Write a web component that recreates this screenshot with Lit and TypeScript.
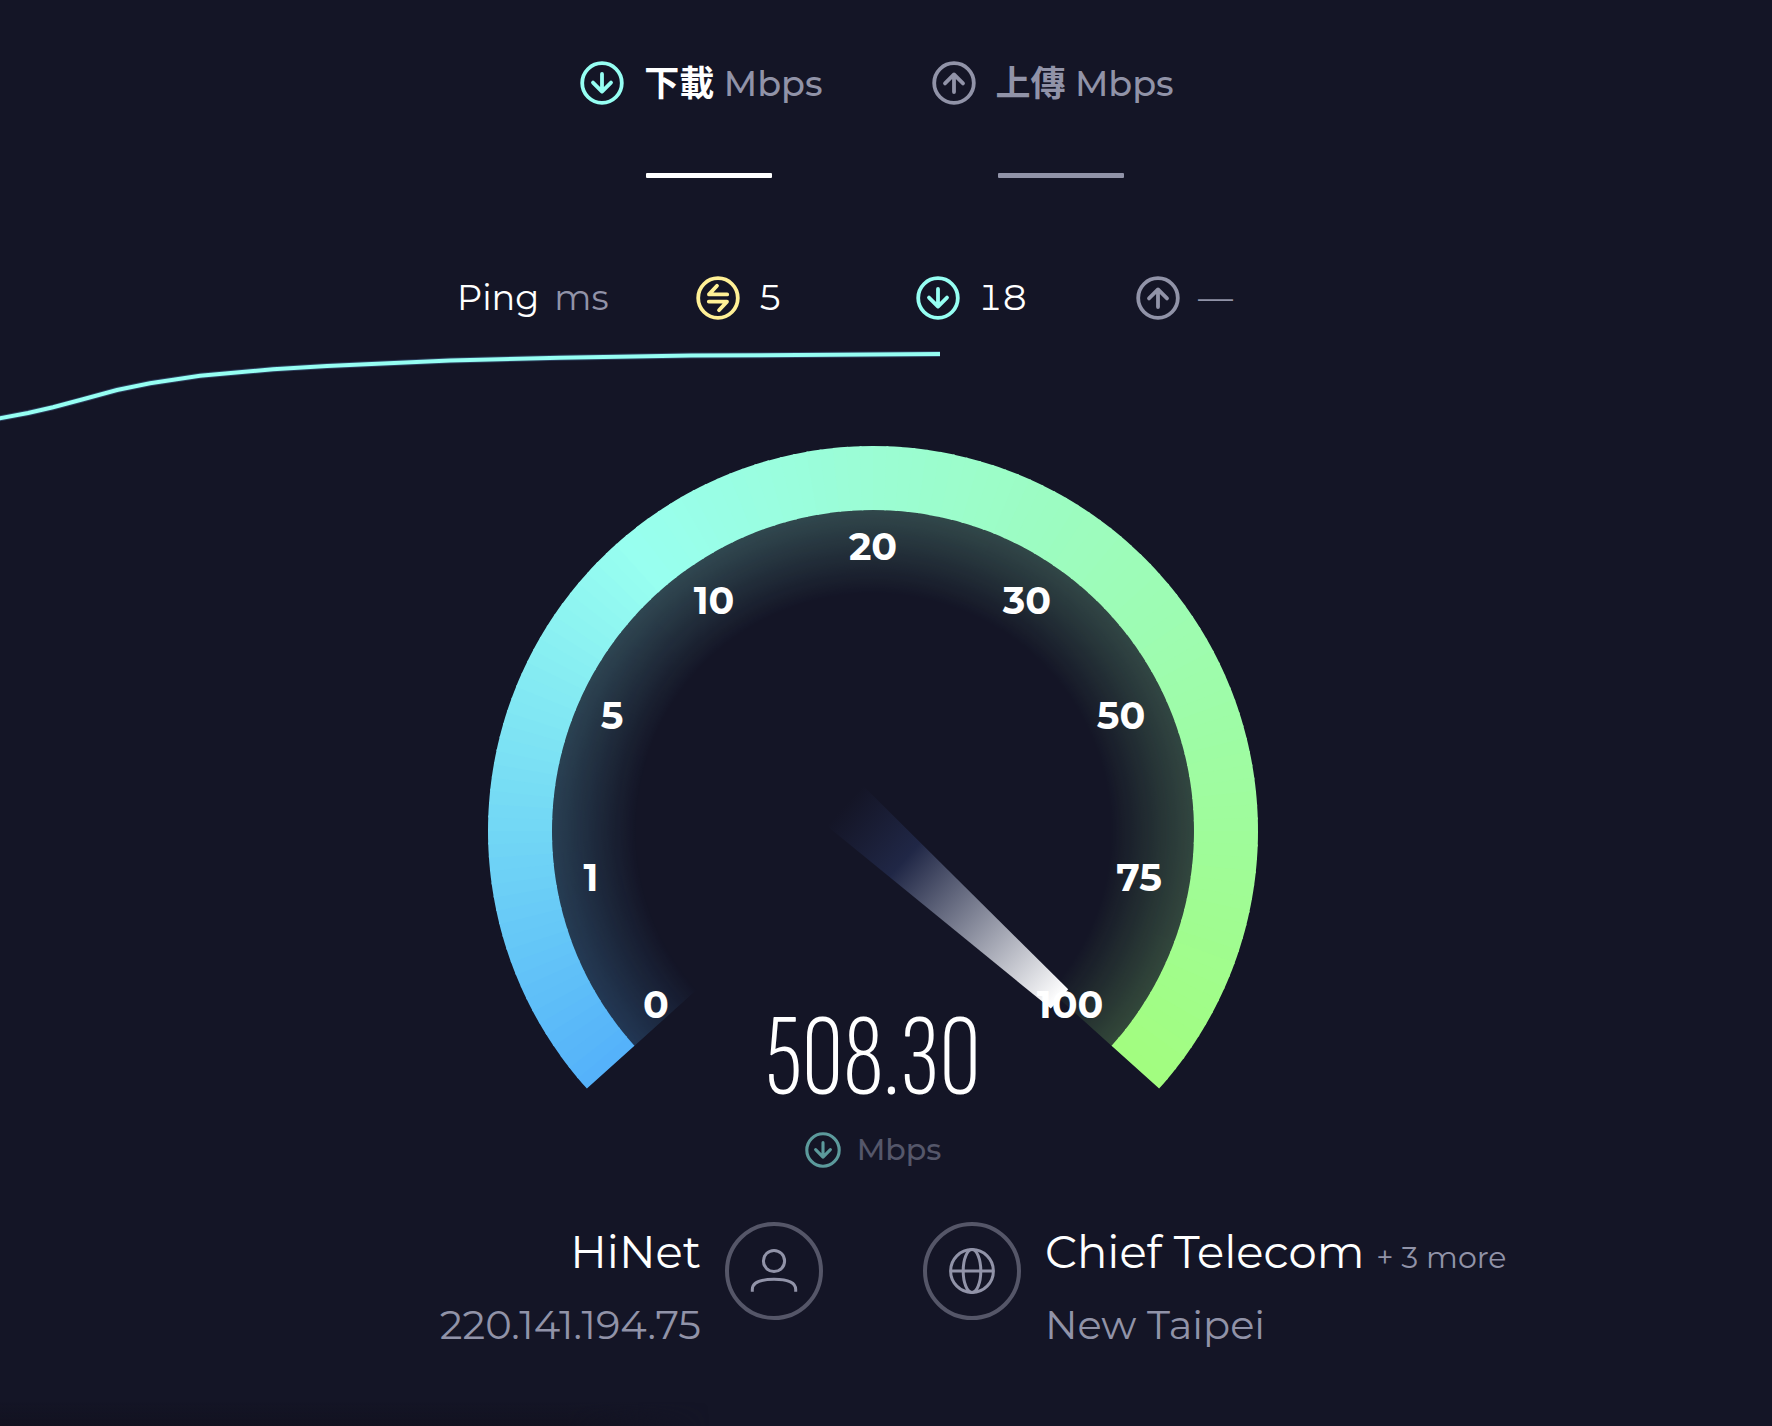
import { LitElement, html, svg, css } from 'lit';
import { customElement, property } from 'lit/decorators.js';

type IconName = 'down' | 'up' | 'swap' | 'user' | 'globe';

@customElement('st-icon')
class StIcon extends LitElement {
  @property() name: IconName = 'down';

  static styles = css`
    :host { display: block; flex: none; width: 44px; height: 44px; }
    svg { display: block; width: 100%; height: 100%; }
    .stroke { fill: none; stroke: currentColor; stroke-width: 3.8; stroke-linecap: round; stroke-linejoin: round; }
    .thin { fill: none; stroke: currentColor; stroke-width: 3; stroke-linecap: butt; }
    .rim { fill: none; stroke: #555668; stroke-width: 4; }
  `;

  render() {
    switch (this.name) {
      case 'down':
        return html`<svg viewBox="-22 -22 44 44" aria-hidden="true">
          <circle class="stroke" r="19.8" /><path class="stroke" d="M0 -9V8.6M-9 -0.4L0 8.6L9 -0.4" /></svg>`;
      case 'up':
        return html`<svg viewBox="-22 -22 44 44" aria-hidden="true">
          <circle class="stroke" r="19.8" /><path class="stroke" d="M0 9V-8.6M-9 0.4L0 -8.6L9 0.4" /></svg>`;
      case 'swap':
        return html`<svg viewBox="-22 -22 44 44" aria-hidden="true">
          <circle class="stroke" r="19.8" /><path class="stroke" d="M9.2 -3.6H-9L-1 -12.2M-9.2 3.6H9L1 12.2" /></svg>`;
      case 'user':
        return html`<svg viewBox="-49 -49 98 98" aria-hidden="true">
          <circle class="rim" r="47" /><circle class="thin" cy="-10" r="10.6" />
          <path class="thin" d="M-21.7 20.8V18.6C-21.7 11.6 -14.6 8.3 0 8.3S21.7 11.6 21.7 18.6V20.8" /></svg>`;
      default:
        return html`<svg viewBox="-49 -49 98 98" aria-hidden="true">
          <circle class="rim" r="47" /><circle class="thin" r="21.4" />
          <ellipse class="thin" rx="8.8" ry="21.4" /><path class="thin" d="M-21.4 0H21.4" /></svg>`;
    }
  }
}

const START = -132;
const SWEEP = 264;
const OUTER = 385;
const INNER = 321;
const GLOW = 236;

const STOPS: [number, number[]][] = [
  [0, [84, 177, 250]],
  [42, [114, 215, 245]],
  [91, [152, 255, 240]],
  [132, [155, 253, 212]],
  [177, [157, 252, 184]],
  [222, [159, 252, 155]],
  [264, [162, 253, 127]],
];

const LABELS: [string, number, number][] = [
  ['0', -217, 174], ['1', -282, 47], ['5', -261, -115], ['10', -159, -230], ['20', 0, -284],
  ['30', 154, -230], ['50', 248, -115], ['75', 266, 47], ['100', 197, 174],
];

const point = (r: number, deg: number) => {
  const a = (deg * Math.PI) / 180;
  return `${(r * Math.sin(a)).toFixed(2)} ${(-r * Math.cos(a)).toFixed(2)}`;
};

const sector = (r0: number, r1: number, a0: number, a1: number) =>
  `M${point(r0, a0)}L${point(r1, a0)}A${r1} ${r1} 0 0 1 ${point(r1, a1)}L${point(r0, a1)}A${r0} ${r0} 0 0 0 ${point(r0, a0)}Z`;

const colorAt = (deg: number) => {
  let i = 1;
  while (i < STOPS.length - 1 && deg > STOPS[i][0]) i++;
  const [d0, c0] = STOPS[i - 1];
  const [d1, c1] = STOPS[i];
  const t = (deg - d0) / (d1 - d0);
  return `rgb(${c0.map((v, k) => Math.round(v + (c1[k] - v) * t)).join(',')})`;
};

@customElement('st-gauge')
class StGauge extends LitElement {
  @property() value = '';

  static styles = css`
    :host { display: block; width: 100%; max-width: 770px; }
    svg { display: block; width: 100%; height: auto; overflow: visible; }
    .label { fill: #fff; font: 700 38px Montserrat, Inter, sans-serif; text-anchor: middle; }
    .value { fill: #fff; font: 300 117px 'Sofia Sans Extra Condensed', 'Open Sans Condensed Light', 'Roboto Condensed', sans-serif; text-anchor: middle; }
  `;

  private band(r0: number, r1: number) {
    const step = 2;
    const parts = [];
    for (let d = 0; d < SWEEP; d += step) {
      const end = Math.min(SWEEP, d + step + 0.3);
      parts.push(svg`<path d=${sector(r0, r1, START + d, START + end)} fill=${colorAt(d + step / 2)} />`);
    }
    return parts;
  }

  render() {
    return html`<svg viewBox="-385 -385 770 658" role="img" aria-label="${this.value} Mbps">
      <defs>
        <radialGradient id="fade" gradientUnits="userSpaceOnUse" cx="0" cy="0" r=${INNER}>
          <stop offset=${GLOW / INNER} stop-color="#fff" stop-opacity="0" />
          <stop offset="1" stop-color="#fff" stop-opacity="0.22" />
        </radialGradient>
        <mask id="glow" maskUnits="userSpaceOnUse" x="-385" y="-385" width="770" height="770">
          <circle r=${INNER + 2} fill="url(#fade)" />
        </mask>
        <linearGradient id="needle" gradientUnits="userSpaceOnUse" x1="-38" y1="0" x2="250" y2="0">
          <stop offset="0" stop-color="#1f2645" stop-opacity="0" />
          <stop offset="0.28" stop-color="#202746" />
          <stop offset="1" stop-color="#fff" />
        </linearGradient>
      </defs>
      <g mask="url(#glow)">${this.band(GLOW, INNER + 1)}</g>
      <g>${this.band(INNER, OUTER)}</g>
      <path transform="rotate(42)" fill="url(#needle)" d="M-38 -27L251 -13V13L-38 27Z" />
      ${LABELS.map(([t, x, y]) => svg`<text class="label" x=${x} y=${y + 13}>${t}</text>`)}
      <text class="value" x="0" y="263">${this.value}</text>
    </svg>`;
  }
}

@customElement('app-root')
class AppRoot extends LitElement {
  static styles = css`
    :host {
      display: flex; flex-direction: column; min-height: 100vh; box-sizing: border-box; overflow: hidden;
      background: #141526; color: #fff; font-family: Montserrat, Inter, 'Noto Sans CJK TC', sans-serif;
    }
    .content { display: flex; flex-direction: column; align-items: center; padding-right: 26px; }
    .results { display: flex; gap: 109px; padding: 60px 0 0 8px; }
    .result { display: grid; grid-template-columns: 44px auto; column-gap: 20px; align-items: center; }
    .title { padding-top: 2px; font-size: 35px; line-height: 44px; font-weight: 500; color: #9193a8; white-space: nowrap; }
    .title b { font-weight: 700; }
    .teal { color: #96fff3; }
    .yellow { color: #fff096; }
    .white, .title .white { color: #fff; }
    .muted { color: #9193a8; }
    .bar { grid-column: 2; width: 126px; height: 5px; margin: 67px 0 0 2px; border-radius: 1px; background: currentColor; }
    .ping {
      display: grid; grid-template-columns: 239px 220px 220px 153px; align-items: center;
      margin: 98px 0 0; font-size: 35px; line-height: 44px;
    }
    .pair { display: flex; align-items: center; gap: 18px; font-variant-numeric: tabular-nums; }
    .unit { margin-left: 6px; color: #9193a8; }
    .chart { display: block; width: 100%; height: 126px; }
    .halo { fill: none; stroke: #2c3f5c; stroke-width: 6; vector-effect: non-scaling-stroke; }
    .line { fill: none; stroke: #96fff3; stroke-width: 4; vector-effect: non-scaling-stroke; }
    .speed { display: flex; align-items: center; gap: 16px; margin-top: 28px; font-size: 30px; line-height: 36px; font-weight: 500; color: #55576a; }
    .speed st-icon { width: 36px; height: 36px; color: #5c9a9c; }
    .hosts { display: grid; grid-template-columns: 1fr 1fr; column-gap: 100px; width: 100%; margin-top: 54px; }
    .host { display: flex; gap: 24px; }
    .host st-icon { width: 98px; height: 98px; color: #9193a8; }
    .client { justify-content: flex-end; text-align: right; }
    .lines { display: flex; flex-direction: column; gap: 13px; white-space: nowrap; }
    .name { font-size: 45px; line-height: 60px; }
    .sub { font-size: 40px; line-height: 60px; color: #9193a8; }
    .more { font-size: 30px; line-height: 36px; color: #9193a8; }
    .shade {
      width: 40%; height: 24px; margin-top: auto;
      background: linear-gradient(to bottom, transparent, #121220);
      mask-image: linear-gradient(to right, #000 80%, transparent);
    }
  `;

  render() {
    return html`
      <div class="content">
        <div class="results">
          <div class="result">
            <st-icon class="teal" name="down"></st-icon>
            <div class="title"><b class="white">下載</b> Mbps</div>
            <div class="bar white"></div>
          </div>
          <div class="result">
            <st-icon class="muted" name="up"></st-icon>
            <div class="title"><b>上傳</b> Mbps</div>
            <div class="bar muted"></div>
          </div>
        </div>
        <div class="ping">
          <div>Ping <span class="unit">ms</span></div>
          <div class="pair"><st-icon class="yellow" name="swap"></st-icon>5</div>
          <div class="pair"><st-icon class="teal" name="down"></st-icon>18</div>
          <div class="pair muted"><st-icon name="up"></st-icon>—</div>
        </div>
      </div>
      <svg class="chart" viewBox="0 1 1772 126" preserveAspectRatio="none" aria-hidden="true">
        ${['halo', 'line'].map((c) => svg`<path class=${c} d="M-2 99.6L28 94L53 88.3L83 80.3L117 71L150 64.3L200 56.7L273 50.3L327 47L450 41.6L560 38.8L691 36.6L940 35" />`)}
      </svg>
      <div class="content">
        <st-gauge value="508.30"></st-gauge>
        <div class="speed"><st-icon name="down"></st-icon>Mbps</div>
        <div class="hosts">
          <div class="host client">
            <div class="lines">
              <div class="name">HiNet</div>
              <div class="sub">220.141.194.75</div>
            </div>
            <st-icon name="user"></st-icon>
          </div>
          <div class="host">
            <st-icon name="globe"></st-icon>
            <div class="lines">
              <div class="name">Chief Telecom <span class="more">+ 3 more</span></div>
              <div class="sub">New Taipei</div>
            </div>
          </div>
        </div>
      </div>
      <div class="shade"></div>
    `;
  }
}
